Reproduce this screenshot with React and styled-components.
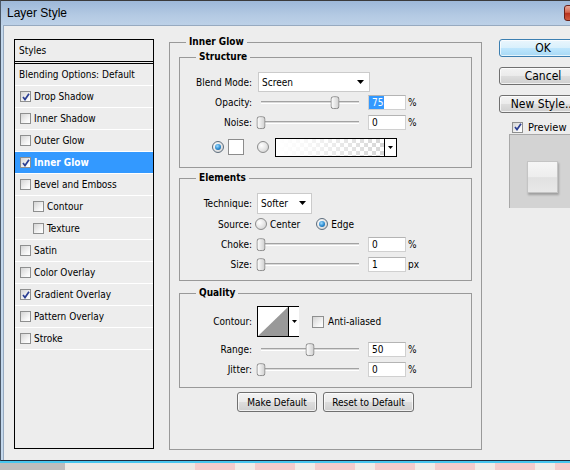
import React from "react";
import styled, { createGlobalStyle, css } from "styled-components";

const UI = `Tahoma, "DejaVu Sans Condensed", "Liberation Sans", sans-serif`;

const Global = createGlobalStyle`
  html, body { margin: 0; padding: 0; width: 570px; height: 470px; overflow: hidden; }
  body { font-family: ${UI}; font-size: 10px; color: #000; background: #ededed; }
  * { box-sizing: border-box; }
`;

const Screen = styled.div`
  width: 570px;
  height: 470px;
  overflow: hidden;
  display: flex;
  flex-direction: column;
  align-items: flex-start;
`;

const Window = styled.div`
  width: 615px;
  height: 461px;
  flex-shrink: 0;
  display: flex;
  flex-direction: column;
  border-top: 1px solid #3a3a3a;
  border-left: 1px solid #4b5868;
  border-bottom: 1px solid #1c2b3d;
  background: #c4d8ec;
`;

const TitleBar = styled.div`
  height: 24px;
  flex-shrink: 0;
  display: flex;
  align-items: center;
  padding-left: 6px;
  background: linear-gradient(#9db8d8, #b4cae3 60%, #bdd1e8);
`;

const Title = styled.span`
  font-family: "Liberation Sans", Arial, sans-serif;
  font-size: 12px;
  color: #000;
`;

const CloseButton = styled.span`
  width: 43px;
  height: 16px;
  margin: 0 8px 0 auto;
  border: 1px solid #6b2118;
  border-radius: 3px;
  background: linear-gradient(#e9a998, #d3674f 45%, #b8331f 52%, #cf5a3d);
`;

const Body = styled.div`
  flex: 1;
  margin-left: 2px;
  border-top: 1px solid #97aac0;
  border-left: 1px solid #97aac0;
  background: #ededed;
  display: flex;
  align-items: flex-start;
  padding: 9px 0 0 10px;
`;

/* ---------- Styles list ---------- */

const StylesList = styled.div`
  margin-top: 4px;
  width: 140px;
  height: 410px;
  flex-shrink: 0;
  border: 1px solid #000;
  display: flex;
  flex-direction: column;
`;

const ListHeader = styled.div`
  height: 24px;
  flex-shrink: 0;
  border-bottom: 3px double #000;
  display: flex;
  align-items: center;
  padding-left: 4px;
`;

const ListRow = styled.div`
  height: 22px;
  flex-shrink: 0;
  border-bottom: 1px solid #fff;
  display: flex;
  align-items: center;
  gap: 3px;
  padding-left: ${(p) => p.$indent}px;
  ${(p) =>
    p.$selected &&
    css`
      background: #3399ff;
      color: #fff;
      font-weight: bold;
    `}
`;

const CheckBox = styled.span`
  width: ${(p) => p.$size}px;
  height: ${(p) => p.$size}px;
  flex-shrink: 0;
  border: 1px solid #8e8f8f;
  background: linear-gradient(135deg, #d4d4d4, #f7f7f7 70%, #fff);
  display: flex;
  align-items: center;
  justify-content: center;
`;

const Check = ({ checked, size = 11 }) => (
  <CheckBox $size={size}>
    {checked && (
      <svg width="8" height="8" viewBox="0 0 8 8">
        <path d="M1 4 L3 6.6 L7 0.8" fill="none" stroke="#2b3f93" strokeWidth="1.7" />
      </svg>
    )}
  </CheckBox>
);

/* ---------- Group boxes ---------- */

const MainGroup = styled.fieldset`
  margin: 0 0 0 15px;
  padding: 1px 9px 37px 9px;
  border: 1px solid #999;
  width: 313px;
  flex-shrink: 0;
  min-width: 0;
`;

const Legend = styled.legend`
  font-weight: bold;
  line-height: 14px;
  padding: 0 3px;
  margin-left: ${(p) => p.$x}px;
`;

const Group = styled.fieldset`
  margin: ${(p) => p.$mt}px 0 0 0;
  padding: ${(p) => p.$pt}px 0 ${(p) => p.$pb}px 0;
  border: 1px solid #999;
  min-width: 0;
`;

const Row = styled.div`
  display: flex;
  align-items: center;
  height: ${(p) => p.$h || 20}px;
  margin-top: ${(p) => p.$mt || 0}px;
  padding-left: ${(p) => p.$pl || 0}px;
`;

const Label = styled.span`
  width: 72px;
  flex-shrink: 0;
  text-align: right;
  white-space: nowrap;
`;

const SliderWrap = styled.div`
  position: relative;
  margin-left: 9px;
  width: 98px;
  height: 14px;
  display: flex;
  align-items: center;
  flex-shrink: 0;
`;

const Track = styled.div`
  width: 100%;
  height: 3px;
  border-top: 1px solid #a2a2a2;
  border-bottom: 1px solid #fff;
  background: #dadada;
`;

const Thumb = styled.svg`
  position: absolute;
  top: 50%;
  transform: translate(-50%, -45%);
`;

const Slider = ({ value }) => (
  <SliderWrap>
    <Track />
    <Thumb width="9" height="13" viewBox="0 0 9 13" style={{ left: `${value}%` }}>
      <defs>
        <linearGradient id="tg" x1="0" y1="0" x2="1" y2="0">
          <stop offset="0" stopColor="#ffffff" />
          <stop offset="1" stopColor="#cfcfcf" />
        </linearGradient>
      </defs>
      <rect x="0.5" y="0.5" width="8" height="12" rx="2.5" fill="url(#tg)" stroke="#858585" />
    </Thumb>
  </SliderWrap>
);

const ValueBox = styled.div`
  margin-left: 9px;
  width: 38px;
  height: 15px;
  flex-shrink: 0;
  background: #fff;
  border: 1px solid #d0d0d0;
  border-top-color: #b4b4b4;
  display: flex;
  align-items: stretch;
  padding-left: ${(p) => (p.$sel ? 0 : 3)}px;
`;

const ValueText = styled.span`
  display: flex;
  align-items: center;
  ${(p) =>
    p.$sel &&
    css`
      background: #3399ff;
      color: #fff;
      padding: 0 1px 0 3px;
    `}
`;

const Unit = styled.span`
  margin-left: 2px;
`;

const SliderRow = ({ label, value, pos, unit, sel }) => (
  <Row>
    <Label>{label}</Label>
    <Slider value={pos} />
    <ValueBox $sel={sel}>
      <ValueText $sel={sel}>{value}</ValueText>
    </ValueBox>
    <Unit>{unit}</Unit>
  </Row>
);

const Arrow = () => (
  <svg width="7" height="4" viewBox="0 0 7 4">
    <path d="M0 0 H7 L3.5 4 Z" fill="#000" />
  </svg>
);

const SmallArrow = () => (
  <svg width="5" height="3" viewBox="0 0 5 3">
    <path d="M0 0 H5 L2.5 3 Z" fill="#000" />
  </svg>
);

const Select = styled.div`
  margin-left: ${(p) => p.$ml}px;
  width: ${(p) => p.$w}px;
  height: ${(p) => p.$h}px;
  flex-shrink: 0;
  border: 1px solid #cbcbcb;
  background: #fff;
  display: flex;
  align-items: center;
  justify-content: space-between;
  padding: 0 5px 0 3px;
`;

const RadioDot = styled.span`
  width: 12px;
  height: 12px;
  flex-shrink: 0;
  border-radius: 50%;
  border: 1px solid #8b8c8c;
  background: radial-gradient(circle at 35% 35%, #ffffff, #e4e4e4 55%, #c8c8c8);
  display: flex;
  align-items: center;
  justify-content: center;
  margin-left: ${(p) => p.$ml || 0}px;
  ${(p) =>
    p.$on &&
    css`
      border-color: #5d6d7d;
      &::after {
        content: "";
        width: 6px;
        height: 6px;
        border-radius: 50%;
        background: radial-gradient(circle at 40% 35%, #9fdcff, #2a8ad0 55%, #0d4f88);
      }
    `}
`;

const RadioOption = styled.span`
  display: flex;
  align-items: center;
  gap: 3px;
  margin-left: ${(p) => p.$ml}px;
`;

const Swatch = styled.span`
  margin-left: 4px;
  width: 16px;
  height: 16px;
  flex-shrink: 0;
  background: #fff;
  border: 1px solid #8c8c8c;
`;

const GradientBox = styled.div`
  margin-left: 6px;
  width: 122px;
  height: 19px;
  flex-shrink: 0;
  border: 1px solid #000;
  display: flex;
`;

const GradientFill = styled.div`
  flex: 1;
  background:
    linear-gradient(to right, #fff 0%, rgba(255, 255, 255, 0.85) 25%, rgba(255, 255, 255, 0) 100%),
    repeating-conic-gradient(#d6d6d6 0 25%, #fff 0 50%) 0 0 / 8px 8px;
`;

const ArrowCell = styled.div`
  width: ${(p) => p.$w}px;
  flex-shrink: 0;
  border-left: 1px solid #000;
  background: #fff;
  display: flex;
  align-items: center;
  justify-content: center;
`;

const ContourBox = styled.div`
  margin-left: 5px;
  width: 42px;
  height: 31px;
  flex-shrink: 0;
  border: 1px solid #000;
  display: flex;
`;

const ContourPreview = styled.svg`
  display: block;
  flex-shrink: 0;
`;

const CheckOption = styled.span`
  display: flex;
  align-items: center;
  gap: 4px;
  margin-left: ${(p) => p.$ml}px;
`;

const ButtonRow = styled.div`
  display: flex;
  justify-content: center;
  gap: 6px;
  margin-top: 4px;
`;

const buttonFace = css`
  border: 1px solid #707070;
  border-radius: 3px;
  background: linear-gradient(#f3f3f3, #ebebeb 48%, #dddddd 52%, #cfcfcf);
  box-shadow: inset 0 0 0 1px rgba(255, 255, 255, 0.7);
  display: flex;
  align-items: center;
  justify-content: center;
  font-family: ${UI};
  color: #000;
  padding: 0;
`;

const PanelButton = styled.button`
  ${buttonFace};
  width: ${(p) => p.$w}px;
  height: 20px;
  font-size: 10px;
`;

/* ---------- Right column ---------- */

const RightCol = styled.div`
  margin: 4px 0 0 17px;
  display: flex;
  flex-direction: column;
  flex-shrink: 0;
`;

const ButtonStack = styled.div`
  display: flex;
  flex-direction: column;
  gap: 10px;
`;

const DialogButton = styled.button`
  ${buttonFace};
  width: 88px;
  height: 18px;
  font-size: 12px;
  ${(p) =>
    p.$default &&
    css`
      border-color: #3c7fb1;
      background: linear-gradient(#eaf6fd, #d9f0fc 48%, #bee6fd 52%, #a7d9f5);
    `}
`;

const PreviewCheck = styled.div`
  display: flex;
  align-items: center;
  gap: 5px;
  margin-top: 8px;
  padding-left: 13px;
  height: 12px;
  font-size: 11px;
  white-space: nowrap;
`;

const PreviewBox = styled.div`
  margin: 1px 0 0 10px;
  width: 66px;
  height: 74px;
  background: #d3d3d3;
  border-top: 1px solid #a8a8a8;
  border-left: 1px solid #a8a8a8;
  display: flex;
  justify-content: center;
  padding-top: 26px;
`;

const PreviewSwatch = styled.div`
  width: 31px;
  height: 32px;
  background: linear-gradient(#f6f6f6, #ededed 50%, #e1e1e1 52%, #e8e8e8);
  border: 1px solid #c4c4c4;
  box-shadow: 1px 2px 2px rgba(0, 0, 0, 0.25);
`;

/* ---------- Below the window ---------- */

const Edge = styled.div`
  width: 100%;
  height: 2px;
  flex-shrink: 0;
  background: #48c6ee;
`;

const Backdrop = styled.div`
  width: 100%;
  flex: 1;
  background:
    linear-gradient(to right, #bdbdbd 0 65px, #ebe9e5 65px 195px, transparent 195px),
    repeating-linear-gradient(to right, #f4cccc 0 40px, #efece8 40px 60px) 15px 0;
`;

const styles = [
  { name: "Drop Shadow", checked: true },
  { name: "Inner Shadow" },
  { name: "Outer Glow" },
  { name: "Inner Glow", checked: true, selected: true },
  { name: "Bevel and Emboss" },
  { name: "Contour", sub: true },
  { name: "Texture", sub: true },
  { name: "Satin" },
  { name: "Color Overlay" },
  { name: "Gradient Overlay", checked: true },
  { name: "Pattern Overlay" },
  { name: "Stroke" },
];

export default function App() {
  return (
    <>
      <Global />
      <Screen>
        <Window>
          <TitleBar>
            <Title>Layer Style</Title>
            <CloseButton />
          </TitleBar>
          <Body>
            <StylesList>
              <ListHeader>Styles</ListHeader>
              <ListRow $indent={4}>Blending Options: Default</ListRow>
              {styles.map((s) => (
                <ListRow key={s.name} $indent={s.sub ? 18 : 5} $selected={s.selected}>
                  <Check checked={s.checked} />
                  {s.name}
                </ListRow>
              ))}
            </StylesList>

            <MainGroup>
              <Legend $x={7}>Inner Glow</Legend>

              <Group $mt={0} $pt={8} $pb={10}>
                <Legend $x={16}>Structure</Legend>
                <Row>
                  <Label>Blend Mode:</Label>
                  <Select $ml={6} $w={112} $h={20}>
                    <span>Screen</span>
                    <Arrow />
                  </Select>
                </Row>
                <SliderRow label="Opacity:" value="75" pos={75} unit="%" sel />
                <SliderRow label="Noise:" value="0" pos={0} unit="%" />
                <Row $mt={5} $pl={32}>
                  <RadioDot $on />
                  <Swatch />
                  <RadioDot $ml={13} />
                  <GradientBox>
                    <GradientFill />
                    <ArrowCell $w={12}>
                      <SmallArrow />
                    </ArrowCell>
                  </GradientBox>
                </Row>
              </Group>

              <Group $mt={3} $pt={7} $pb={6}>
                <Legend $x={16}>Elements</Legend>
                <Row $h={22}>
                  <Label>Technique:</Label>
                  <Select $ml={5} $w={55} $h={21}>
                    <span>Softer</span>
                    <Arrow />
                  </Select>
                </Row>
                <Row>
                  <Label>Source:</Label>
                  <RadioOption $ml={3}>
                    <RadioDot />
                    Center
                  </RadioOption>
                  <RadioOption $ml={16}>
                    <RadioDot $on />
                    Edge
                  </RadioOption>
                </Row>
                <SliderRow label="Choke:" value="0" pos={0} unit="%" />
                <SliderRow label="Size:" value="1" pos={0} unit="px" />
              </Group>

              <Group $mt={5} $pt={6} $pb={8}>
                <Legend $x={16}>Quality</Legend>
                <Row $h={31}>
                  <Label>Contour:</Label>
                  <ContourBox>
                    <ContourPreview width="30" height="29" viewBox="0 0 30 29">
                      <rect width="30" height="29" fill="#fff" />
                      <path d="M0 29 L30 0 L30 29 Z" fill="#999" />
                    </ContourPreview>
                    <ArrowCell $w={11}>
                      <SmallArrow />
                    </ArrowCell>
                  </ContourBox>
                  <CheckOption $ml={13}>
                    <Check size={12} />
                    Anti-aliased
                  </CheckOption>
                </Row>
                <Row $mt={2}>
                  <Label>Range:</Label>
                  <Slider value={50} />
                  <ValueBox>
                    <ValueText>50</ValueText>
                  </ValueBox>
                  <Unit>%</Unit>
                </Row>
                <SliderRow label="Jitter:" value="0" pos={0} unit="%" />
              </Group>

              <ButtonRow>
                <PanelButton $w={80}>Make Default</PanelButton>
                <PanelButton $w={91}>Reset to Default</PanelButton>
              </ButtonRow>
            </MainGroup>

            <RightCol>
              <ButtonStack>
                <DialogButton $default>OK</DialogButton>
                <DialogButton>Cancel</DialogButton>
                <DialogButton>New Style...</DialogButton>
              </ButtonStack>
              <PreviewCheck>
                <Check checked />
                Preview
              </PreviewCheck>
              <PreviewBox>
                <PreviewSwatch />
              </PreviewBox>
            </RightCol>
          </Body>
        </Window>
        <Edge />
        <Backdrop />
      </Screen>
    </>
  );
}
